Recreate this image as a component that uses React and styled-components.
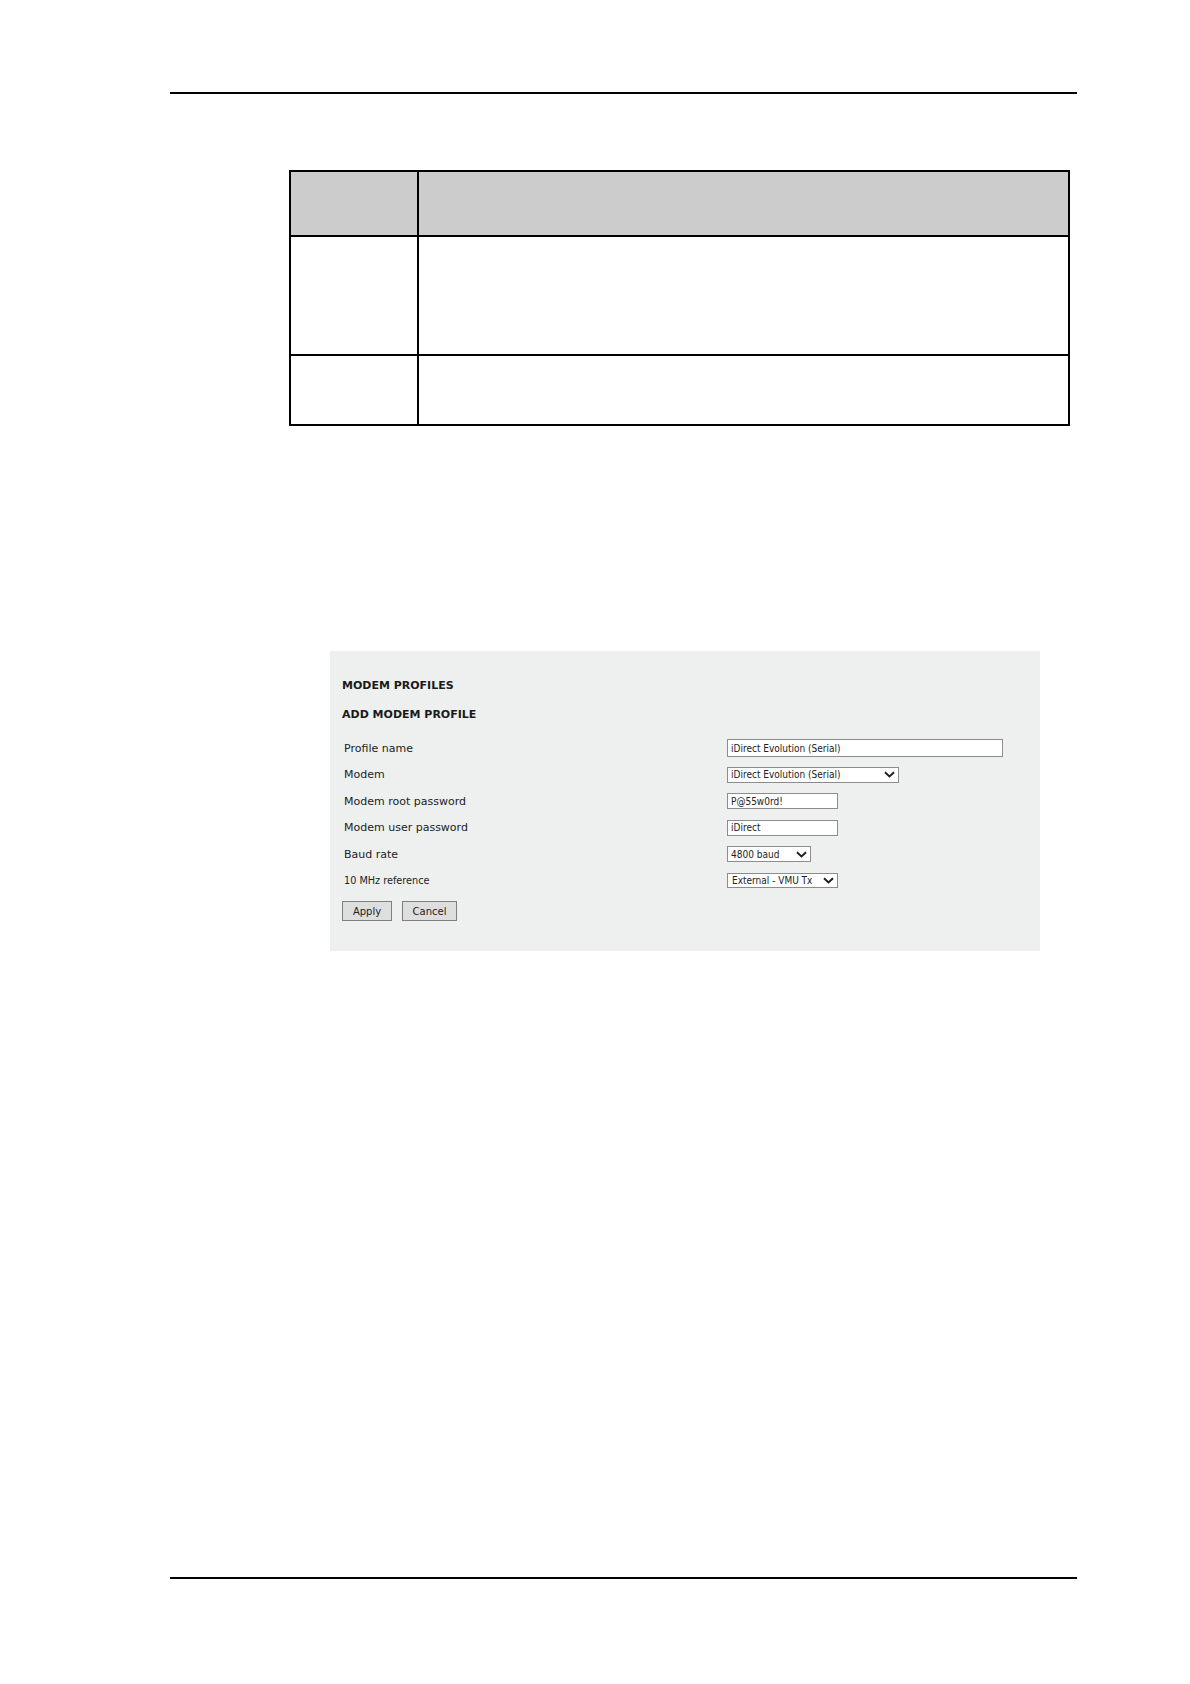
import styled, { createGlobalStyle } from 'styled-components'

const GlobalStyle = createGlobalStyle`
    html, body {
        margin: 0;
        padding: 0;
        background: #ffffff;
    }
    body {
        font-family: "DejaVu Sans", Verdana, sans-serif;
        color: #111;
    }
`

const Page = styled.div`
    display: flex;
    flex-direction: column;
    width: 1190px;
    min-height: 1684px;
    padding: 92px 0 105px;
    box-sizing: border-box;
`

const Rule = styled.div`
    width: 907px;
    height: 2px;
    margin-left: 170px;
    margin-top: ${props => props.bottom ? 'auto' : '0'};
    background: #000;
`

const SpecTable = styled.div`
    display: grid;
    grid-template-columns: 126px 1fr;
    grid-template-rows: 63px 117px 68px;
    gap: 2px;
    width: 781px;
    margin: 76px 0 0 289px;
    padding: 2px;
    box-sizing: border-box;
    background: #000;
`

const Cell = styled.div`
    background: ${props => props.head ? '#cccccc' : '#ffffff'};
`

const Panel = styled.div`
    display: flex;
    flex-direction: column;
    width: 710px;
    margin: 225px 0 0 330px;
    padding: 28px 12px 30px;
    box-sizing: border-box;
    background: #eef0f0;
`

const Heading = styled.div`
    font-size: 11px;
    line-height: 14px;
    font-weight: bold;
    color: #1a1a1a;
    margin-bottom: ${props => props.last ? 13 : 15}px;
`

const FormGrid = styled.div`
    display: grid;
    grid-template-columns: 385px 1fr;
    grid-auto-rows: 26.5px;
    align-items: center;
`

const Label = styled.div`
    padding-left: 2px;
    font-size: ${props => props.small ? '9.7px' : '11px'};
    color: #222;
    white-space: nowrap;
`

const fieldFont = `"DejaVu Sans Condensed", "DejaVu Sans", Verdana, sans-serif`

const TextField = styled.input`
    display: block;
    width: ${props => props.w}px;
    height: ${props => props.h || 16}px;
    margin: 0;
    padding: 0 3px;
    box-sizing: border-box;
    border: 1px solid #8c8c8c;
    border-radius: 0;
    background: #fff;
    font-family: ${fieldFont};
    font-size: 10px;
    color: #222;
    outline: none;
`

const SelectBox = styled.div`
    display: flex;
    align-items: center;
    justify-content: space-between;
    width: ${props => props.w}px;
    height: ${props => props.h || 16}px;
    padding: 0 3px 0 ${props => props.pad || 3}px;
    box-sizing: border-box;
    border: 1px solid #8c8c8c;
    background: #fff;
    font-family: ${fieldFont};
    font-size: 10px;
    color: #222;
    white-space: nowrap;
`

const Chevron = styled.svg`
    flex: none;
    width: 11px;
    height: 7px;
`

const Buttons = styled.div`
    display: flex;
    gap: 10px;
    margin-top: 7px;
`

const Button = styled.button`
    width: ${props => props.w}px;
    height: 20px;
    padding: 0;
    border: 1px solid #7f7f7f;
    border-radius: 0;
    background: #dedede;
    font-family: "DejaVu Sans", Verdana, sans-serif;
    font-size: 10px;
    color: #222;
`

function Select({ value, w, h, pad }) {
    return (
        <SelectBox w={w} h={h} pad={pad}>
            <span>{value}</span>
            <Chevron viewBox="0 0 11 7">
                <path d="M1 1.2 L5.5 5.5 L10 1.2" fill="none" stroke="#1e1e1e" strokeWidth="1.9" />
            </Chevron>
        </SelectBox>
    )
}

export default function App() {
    return (
        <Page>
            <GlobalStyle />
            <Rule />
            <SpecTable>
                <Cell head />
                <Cell head />
                <Cell />
                <Cell />
                <Cell />
                <Cell />
            </SpecTable>
            <Panel>
                <Heading>MODEM PROFILES</Heading>
                <Heading last>ADD MODEM PROFILE</Heading>
                <FormGrid>
                    <Label>Profile name</Label>
                    <TextField w={276} h={18} readOnly value="iDirect Evolution (Serial)" />
                    <Label>Modem</Label>
                    <Select w={172} value="iDirect Evolution (Serial)" />
                    <Label>Modem root password</Label>
                    <TextField w={111} readOnly value="P@55w0rd!" />
                    <Label>Modem user password</Label>
                    <TextField w={111} readOnly value="iDirect" />
                    <Label>Baud rate</Label>
                    <Select w={84} value="4800 baud" />
                    <Label small>10 MHz reference</Label>
                    <Select w={111} h={15} pad={4} value="External - VMU Tx" />
                </FormGrid>
                <Buttons>
                    <Button w={50}>Apply</Button>
                    <Button w={55}>Cancel</Button>
                </Buttons>
            </Panel>
            <Rule bottom />
        </Page>
    )
}
